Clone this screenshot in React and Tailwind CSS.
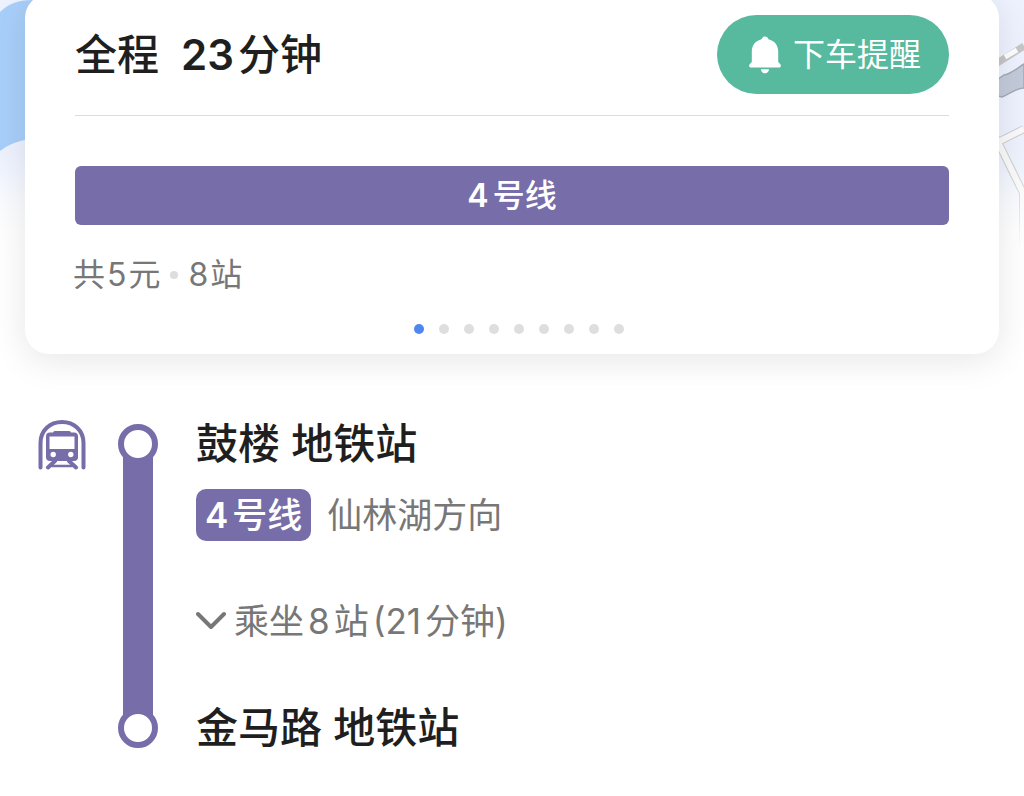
import React, { useState } from 'react'

const routes = [1, 2, 3, 4, 5, 6, 7, 8, 9]

const BellIcon = () => (
  <svg className="w-8 h-[38px] shrink-0" viewBox="0 0 32 38" fill="currentColor" aria-hidden="true">
    <path d="M16 0.5c-1.700 0-3 1.100-3.400 2.700C6.500 4.600 2.800 9.200 2.800 15.500V26L0.600 28.300C-0.400 29.500 0.200 31.500 2 31.500h28c1.800 0 2.400-2 1.400-3.200L29.200 26V15.500C29.200 9.200 25.500 4.600 19.400 3.200 19 1.600 17.700 0.500 16 0.500z" />
    <path d="M12 33.300h8c0 2.300-1.600 4-4 4s-4-1.700-4-4z" />
  </svg>
)

const TrainIcon = () => (
  <svg className="w-12 h-[50px]" viewBox="0 0 48 50" fill="none" stroke="currentColor" strokeLinecap="round" strokeLinejoin="round" aria-hidden="true">
    <path d="M2.500 47.500V23C2.500 10.500 12 2 24 2s21.500 8.500 21.500 21v24.500" strokeWidth="4" />
    <path d="M17 13h14" strokeWidth="4" />
    <path fillRule="evenodd" fill="currentColor" stroke="none" d="M12 12.500h24a4 4 0 0 1 4 4V37a4 4 0 0 1-4 4H12a4 4 0 0 1-4-4V16.500a4 4 0 0 1 4-4zM11.500 16.500v12.500h25V16.500zM15.200 31.800a2.700 2.700 0 1 0 0 5.400 2.700 2.700 0 0 0 0-5.400zM32.800 31.800a2.700 2.700 0 1 0 0 5.400 2.700 2.700 0 0 0 0-5.400z" />
    <path d="M17 41l-7 6.500M31 41l7 6.500" strokeWidth="4" />
    <path d="M14 46h20" strokeWidth="2.500" />
  </svg>
)

const MapBackdrop = () => (
  <div className="absolute inset-x-0 top-0 flex justify-between overflow-hidden bg-linear-to-b from-[#edf2fe] from-60% to-white" aria-hidden="true">
    <svg className="w-20 h-[250px]" viewBox="0 0 80 250">
      <path d="M0 12C8 4 18 0 32 0h48v140H25C15 142 8 145 0 151z" fill="#a8cffa" />
    </svg>
    <svg className="w-20 h-[250px]" viewBox="0 0 80 250" fill="none">
      <path d="M50 65l30-19" stroke="#c6c6c8" strokeWidth="7" />
      <path d="M61 57l12-7" stroke="#fff" strokeWidth="5" />
      <path d="M50 82l10-7c8-2 12-6 20-11v24c-8 0-14 6-22 9l-8-2z" fill="#c3cbdb" stroke="#a3abb9" strokeWidth="1.500" />
      <path d="M50 144l30-15M52 138l27 55v57" stroke="#cfcfd2" strokeWidth="8" />
      <path d="M50 144l30-15M52 138l27 55v57" stroke="#fafafa" strokeWidth="6" />
    </svg>
    <div className="absolute inset-x-0 bottom-0 h-20 bg-linear-to-b from-white/0 to-white" />
  </div>
)

const Station = ({ name }) => (
  <h2 className="text-[42px] leading-[60px] font-medium text-[#1f1f1f]">{name} 地铁站</h2>
)

const Stop = () => (
  <span className="relative z-10 w-10 h-10 shrink-0 rounded-full border-6 border-[#776da8] bg-white" />
)

const App = () => {
  const [active, setActive] = useState(1)

  return (
    <div className="relative min-h-screen overflow-hidden bg-white font-['Inter','Noto_Sans_CJK_SC',sans-serif]" lang="zh-CN">
      <MapBackdrop />

      <section className="relative -mt-1.5 mx-[25px] px-[50px] pt-[21px] pb-5 rounded-3xl bg-white shadow-[0_6px_36px_rgba(0,0,0,0.1)]">
        <div className="flex items-center justify-between pb-[21px] border-b border-[#dcdcdc]">
          <h1 className="flex gap-[22px] text-[42px] leading-[60px] font-medium text-[#1f1f1f]">
            <span>全程</span>
            <span><span className="mr-1 font-semibold">23</span>分钟</span>
          </h1>
          <button className="flex items-center gap-3 h-[79px] pl-8 pr-7 rounded-full bg-[#57b99d] text-white text-[32px] font-normal">
            <BellIcon />
            下车提醒
          </button>
        </div>

        <div className="flex items-center justify-center mt-[50px] h-[59px] rounded-md bg-[#776da8] text-white text-[32px] font-medium">
          <span className="mr-1 font-semibold">4</span>号线
        </div>

        <p className="flex items-center mt-[26px] -ml-0.5 text-[32px] leading-12 text-[#777]">
          共<span className="mx-0.5">5</span>元
          <span className="mx-2.5 w-2 h-2 rounded-full bg-[#ddd]" />
          <span className="mr-0.5">8</span>站
        </p>

        <div className="flex justify-center gap-[15px] mt-[25px] pl-3.5">
          {routes.map(n => (
            <button
              key={n}
              aria-label={`方案${n}`}
              onClick={() => setActive(n)}
              className={`w-2.5 h-2.5 rounded-full ${n === active ? 'bg-[#4f86f0]' : 'bg-[#dedede]'}`}
            />
          ))}
        </div>
      </section>

      <main className="flex px-[38px] pt-[60px] pb-10">
        <div className="pt-1.5 text-[#776da8]">
          <TrainIcon />
        </div>

        <div className="flex flex-col items-center ml-8 pt-2.5 pb-2.5">
          <Stop />
          <span className="grow -my-3 w-[30px] bg-[#776da8]" />
          <Stop />
        </div>

        <div className="ml-[38px]">
          <Station name="鼓楼" />
          <div className="flex items-center gap-4 mt-[15px] text-[35px]">
            <span className="h-[52px] px-[9px] rounded-[10px] bg-[#776da8] text-white leading-[52px] font-medium">
              <span className="mr-1 font-semibold">4</span>号线
            </span>
            <span className="leading-[52px] text-[#777]">仙林湖方向</span>
          </div>
          <button className="flex items-center gap-2 mt-[54px] mb-[51px] text-[35px] leading-[52px] text-[#777]">
            <svg className="w-[30px] h-5" viewBox="0 0 30 20" fill="none" stroke="currentColor" strokeWidth="4" strokeLinecap="round" strokeLinejoin="round" aria-hidden="true">
              <path d="M2 3l13 13L28 3" />
            </svg>
            <span>乘坐<span className="mx-1">8</span>站<span className="mx-1">(21</span>分钟)</span>
          </button>
          <Station name="金马路" />
        </div>
      </main>
    </div>
  )
}

export default App
